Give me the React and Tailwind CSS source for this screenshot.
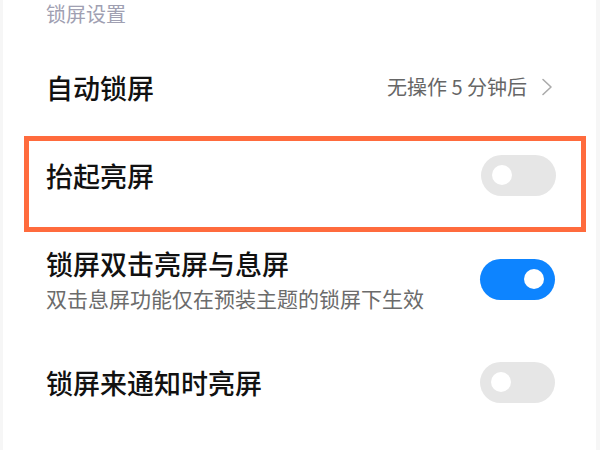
import React from "react";

const font = { fontFamily: '"Noto Sans CJK SC", "Noto Sans", sans-serif' };

function Toggle({ on }) {
  return (
    <div
      className={
        "w-[75px] h-[41px] rounded-full flex items-center px-[11px] shrink-0 " +
        (on ? "bg-[#0d84ff] justify-end" : "bg-[#e6e6e6] justify-start")
      }
    >
      <div className="w-[20px] h-[20px] rounded-full bg-white" />
    </div>
  );
}

export default function App() {
  return (
    <div
      className="w-[600px] h-[450px] bg-white overflow-hidden flex flex-col border-l-[3px] border-r-[4px] border-[#f6f6f6]"
      style={font}
    >
      <div className="h-[28px] flex items-center pl-[43px] text-[20px] leading-none text-[#a0a0b2]">
        锁屏设置
      </div>

      <div className="mt-[22px] h-[74px] flex items-center justify-between pl-[43px] pr-[43px]">
        <span className="text-[27px] leading-none font-medium text-[#111]">自动锁屏</span>
        <div className="flex items-center gap-[14px]">
          <span className="text-[20px] leading-none text-[#666]">无操作 5 分钟后</span>
          <svg width="12" height="18" viewBox="0 0 12 18" fill="none">
            <path d="M2 1.5 L10 9 L2 16.5" stroke="#ababab" strokeWidth="1.6" strokeLinecap="round" strokeLinejoin="round" />
          </svg>
        </div>
      </div>

      <div className="mt-[12px] ml-[21px] w-[562px] h-[96px] border-[5px] border-[#ff6b3d] pt-[13px] pl-[17px] pr-[25px]">
        <div className="h-[42px] flex items-center justify-between">
          <span className="text-[27px] leading-none font-medium text-[#111]">抬起亮屏</span>
          <Toggle on={false} />
        </div>
      </div>

      <div className="mt-[15px] flex items-center justify-between pl-[43px] pr-[41px]">
        <div className="flex flex-col">
          <span className="text-[27px] leading-[34px] font-medium text-[#111]">锁屏双击亮屏与息屏</span>
          <span className="mt-[4px] text-[21px] leading-[26px] text-[#6b6b6b]">
            双击息屏功能仅在预装主题的锁屏下生效
          </span>
        </div>
        <Toggle on={true} />
      </div>

      <div className="mt-[50px] h-[42px] flex items-center justify-between pl-[43px] pr-[41px]">
        <span className="text-[27px] leading-none font-medium text-[#111]">锁屏来通知时亮屏</span>
        <Toggle on={false} />
      </div>
    </div>
  );
}
